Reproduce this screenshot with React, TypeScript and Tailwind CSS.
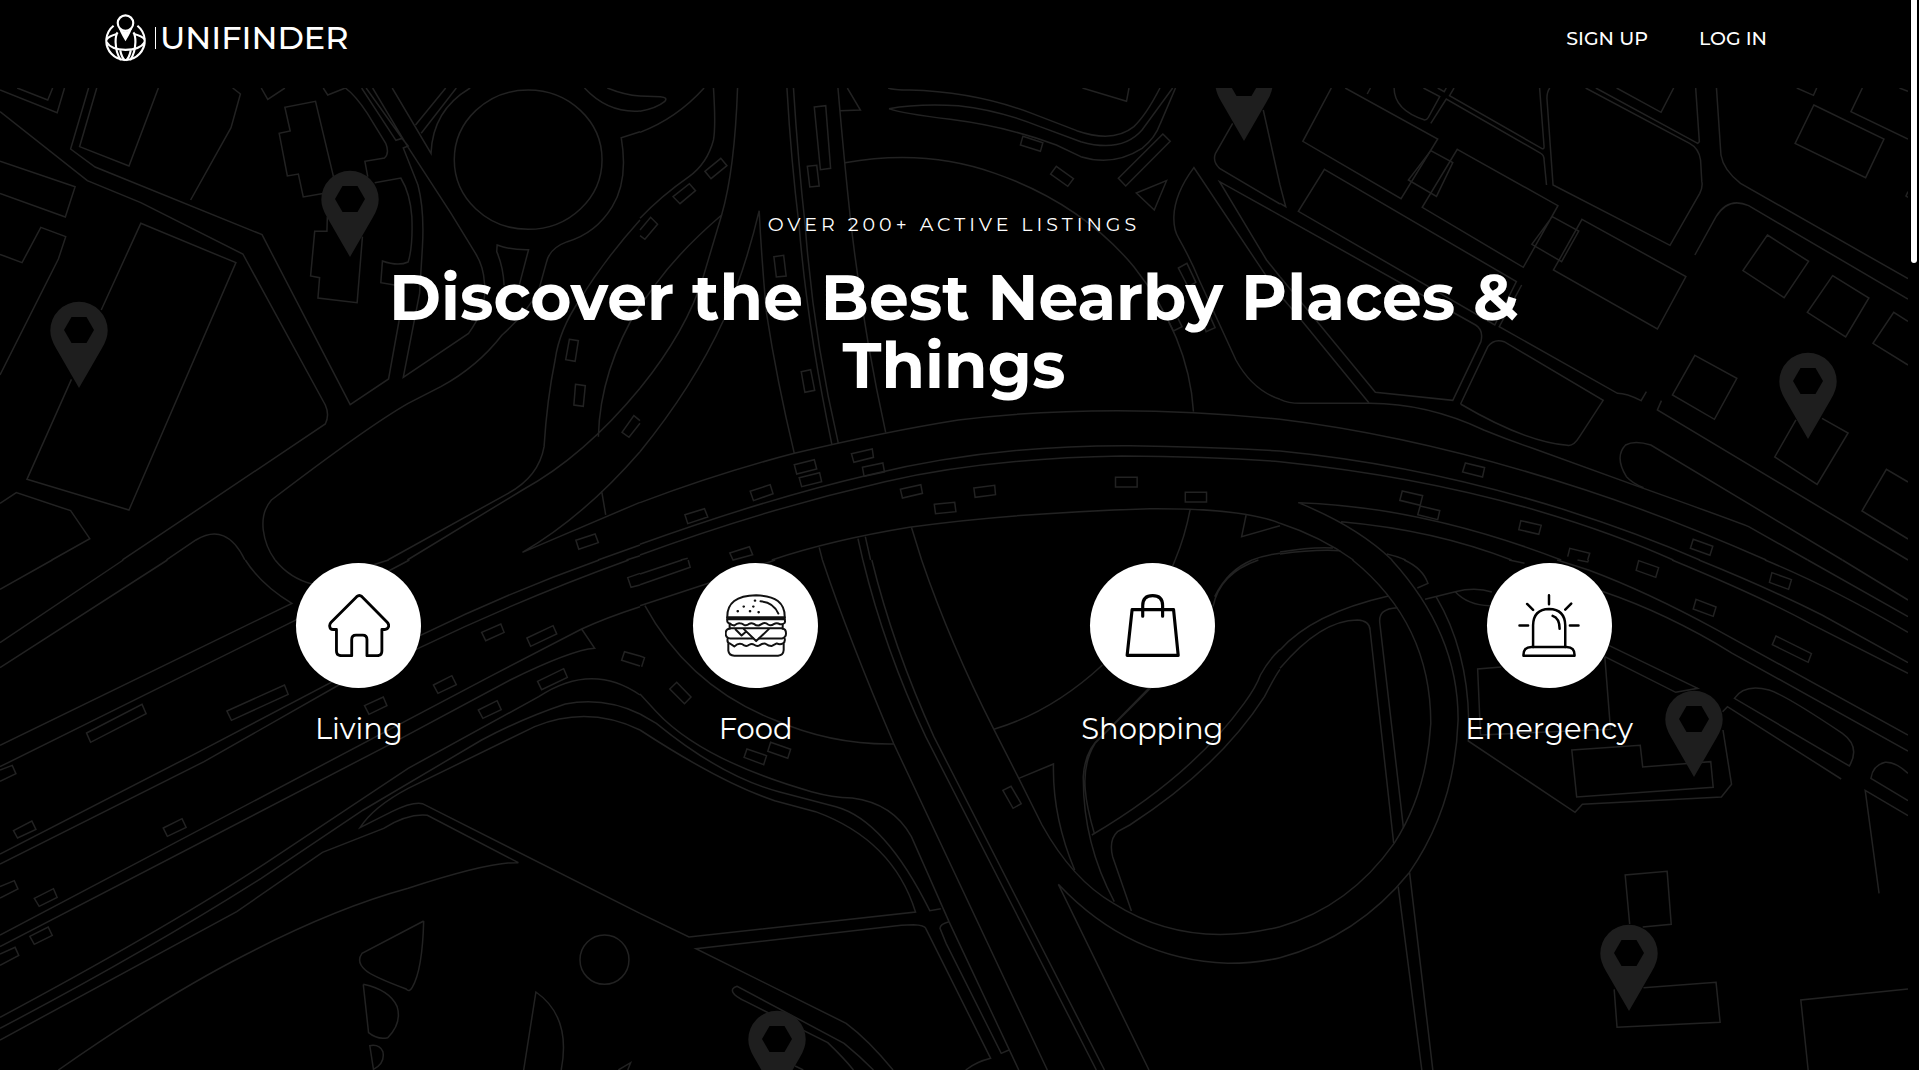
import type { ReactNode } from "react";

type Tile = { transform: string; paths: string[] };

/* Street map line work, split in six sectors that share one drawing area. */
const tiles: Tile[] = [
  {
    transform: "translate(0 60) scale(0.40816 0.33333)",
    paths: [
      "M0 90L140 158L158 84M42 84L117 120L129 84",
      "M0 155L214 362L345 428L595 582L797 1035Q808 1065 797 1092L300 1500",
      "M217 84L173 267L233 321L642 524L858 1034L952 957L978 780",
      "M237 84L195 260L316 318L388 84M570 84L589 102L566 203L467 420M640 84L656 118L698 84",
      "M792 84L803 105L846 84Q870 105 900 160L945 250Q955 280 942 294L894 304L901 350",
      "M795 400L743 411L731 342L704 348L684 220L711 213L698 142L773 124L817 350",
      "M802 470L801 514L771 514L761 648L783 653L779 714L875 728L888 530",
      "M918 368L982 354Q1005 400 1009 470Q1012 560 1000 606Q975 620 937 603L933 668L970 676",
      "M886 84L970 241L988 234M897 84L988 240L1000 258L988 264L1024 375Q1040 450 1035 560L1028 700L988 952L1148 820Q1195 740 1187 670Q1185 620 1165 580L1105 460L1000 262L913 84",
      "M961 84L1056 280Q1060 150 1152 84M1018 195L1092 84M1032 220L1118 84",
      "M1113 299a181 209 0 1 0 362 0a181 209 0 1 0 -362 0",
      "M1432 84Q1490 160 1568 153M1488 84Q1530 105 1568 108",
      "M1568 215L1522 233Q1540 360 1500 440Q1460 520 1390 545Q1345 565 1338 610L1320 690Q1290 760 1230 825Q1170 920 1080 980L1000 1030Q900 1100 665 1320Q640 1355 645 1410Q650 1460 674 1500",
      "M1235 676Q1233 620 1217 575L1218 555Q1250 570 1295 569L1272 676",
      "M1568 480Q1480 600 1420 720Q1370 810 1360 900Q1340 1020 1333 1160Q1320 1250 1245 1300L950 1500",
      "M1568 985Q1430 1190 1280 1290L998 1500M1568 735Q1470 930 1466 1130",
      "M1568 1175Q1430 1370 1280 1477L1568 1327M1474 1293L1484 1365M1465 1500L1568 1455M1535 1500L1568 1487",
      "M1395 838L1417 842L1409 904L1386 899ZM1410 973L1434 977L1429 1039L1406 1035ZM1568 1082L1553 1067L1524 1117L1541 1132L1568 1090M1411 1441L1458 1422L1466 1448L1418 1468Z",
      "M0 304L184 380L160 471L0 400M0 583L54 608L100 502L161 530L143 597L0 945",
      "M248 750L345 490L578 608L316 1350L66 1258L175 958",
      "M0 1330L40 1298L173 1352L220 1436L127 1500M408 1500L480 1440Q555 1385 600 1500",
    ],
  },
  {
    transform: "translate(640 60) scale(0.40816 0.33333)",
    paths: [
      "M0 108L50 110Q70 112 60 125Q40 145 0 154M0 217Q90 175 157 84",
      "M180 84Q186 200 180 240Q165 310 120 350Q50 410 0 475",
      "M239 84Q232 330 200 465L155 650Q115 810 0 985M200 465Q100 570 40 670L0 738",
      "M292 452Q260 620 205 780Q130 980 0 1175M292 452Q298 600 310 760Q335 960 378 1180",
      "M360 84Q370 300 390 500Q410 800 470 1153M376 84Q387 300 405 500Q425 830 486 1150",
      "M485 84Q500 300 515 470Q545 800 602 1118M508 84L540 150L490 152",
      "M427 141L455 137L467 325L442 329ZM410 319L433 316L439 378L416 381ZM328 590L352 586L358 648L334 651ZM395 935L418 929L428 991L404 997Z",
      "M159 334L198 295L213 317L174 356ZM81 410L121 371L136 392L98 431ZM0 510L26 472L43 493L12 538L0 527",
      "M502 308Q700 265 870 340Q1080 430 1210 620Q1345 830 1356 1055",
      "M608 84Q620 90 660 90Q820 95 960 160L1070 212Q1160 250 1210 200Q1240 165 1274 84",
      "M610 146Q680 130 780 137Q880 150 980 200L1080 245Q1180 280 1230 210L1305 84",
      "M610 146Q640 160 760 178Q900 200 1020 255L1080 290Q1160 320 1230 265Q1262 235 1275 190L1312 84M1084 84L1192 124L1198 84",
      "M938 229L987 248L981 274L932 255ZM1020 319L1062 356L1048 379L1006 342ZM1281 222L1299 244L1190 378L1172 355ZM1216 399L1290 362L1260 450Z",
      "M1568 705L1530 640L1357 323Q1310 400 1308 470Q1307 510 1320 535Q1350 600 1370 660L1460 900Q1500 990 1568 1018",
      "M1568 466L1420 365L1535 600L1568 650M1452 190L1410 280Q1402 305 1420 325L1568 432M1527 150L1568 375",
      "M1319 624L1340 610L1362 667L1343 681ZM1295 785L1307 813L1328 800L1318 775M1380 790L1387 815L1409 803L1397 770",
      "M0 1328Q190 1240 378 1180Q600 1115 780 1080Q1150 1025 1568 1078",
      "M0 1453Q300 1320 560 1245Q860 1155 1200 1157Q1400 1160 1568 1173",
      "M0 1485Q300 1350 600 1265Q850 1195 1180 1188Q1400 1190 1568 1205",
      "M323 1500Q470 1440 660 1402Q900 1360 1250 1346Q1400 1345 1482 1363Q1540 1375 1568 1390",
      "M378 1214L427 1199L433 1227L384 1242ZM390 1253L440 1238L445 1265L396 1280ZM518 1181L569 1167L572 1192L524 1207ZM545 1222L595 1209L599 1236L549 1249Z",
      "M270 1294L319 1274L326 1301L278 1322ZM110 1364L158 1346L166 1371L117 1391ZM638 1288L688 1274L692 1300L643 1314ZM818 1284L869 1276L871 1304L821 1312ZM721 1333L771 1327L774 1355L724 1361Z",
      "M1165 1252h53v29h-53ZM1336 1297h52v29h-52ZM220 1479L268 1460L276 1484L228 1500ZM100 1500L117 1495",
      "M439 1462L447 1500M534 1436L546 1500M552 1430L565 1500M665 1402L690 1500M1348 1348Q1335 1430 1311 1500",
      "M1485 1365L1474 1430L1568 1397M1500 1500Q1530 1485 1568 1480",
    ],
  },
  {
    transform: "translate(1280 60) scale(0.40753 0.33333)",
    paths: [
      "M126 84L56 244L297 416L387 237L160 84M222 84L214 102M280 84Q280 150 355 180Q360 180 364 172L392 110L352 84M387 84L403 95L408 84",
      "M427 84L416 107L643 266Q648 268 648 260L637 84M370 190L408 117L640 280Q648 285 648 300L654 375",
      "M662 84Q655 95 655 115L670 375L957 556L1030 400Q1038 380 1035 365L1032 300Q1028 265 1005 250L750 84",
      "M775 84L1025 250L1029 245L1020 84M826 84L935 157L966 84",
      "M1071 84L1082 285Q1088 330 1130 370L1541 656M1018 585L1070 470Q1100 410 1150 437L1541 717",
      "M1268 84L1309 106L1317 84M1429 84L1401 155L1541 237M1520 84L1541 94M1310 135L1482 237L1437 353L1264 250ZM1541 395L1536 408L1541 412",
      "M109 328L580 665L527 795L45 454ZM370 272L424 308L384 409L315 360ZM435 268L682 437L597 622L349 442ZM668 470L733 513L691 605L618 553ZM741 478L996 650L926 807L671 630Z",
      "M593 675L538 800L828 1000Q850 1000 886 1022L899 995M936 1022L926 1050L1541 1500",
      "M1196 525L1297 604L1237 713L1136 632ZM1356 647L1445 714L1388 831L1294 757ZM1541 784L1506 757L1455 850L1541 915M1018 886L1121 955L1066 1078L963 1005Z",
      "M1330 1075L1394 1119L1318 1273L1214 1191L1266 1080M1541 1266L1488 1228L1428 1353L1541 1437",
      "M0 466L480 795Q500 810 493 845L424 1021L234 997L88 780L0 650M0 705L52 780L218 1028M0 375L14 440L0 430",
      "M0 1018Q20 1030 50 1030L220 1030Q360 1030 500 1110Q560 1140 620 1165L880 1280Q1110 1380 1150 1400L1295 1500",
      "M0 1078Q350 1130 750 1290Q950 1370 1193 1500M0 1173Q350 1215 700 1350Q880 1420 1030 1500M0 1205Q350 1250 640 1355Q820 1420 965 1500",
      "M1380 1500L910 1155Q870 1140 848 1155Q820 1190 850 1250Q865 1270 892 1283",
      "M443 1032L510 860Q525 835 550 845L793 1021L735 1130Q720 1160 705 1156Q600 1145 443 1032",
      "M0 1390Q100 1430 180 1500M275 1500Q190 1400 45 1328Q350 1340 690 1500M150 1385Q380 1410 568 1500",
      "M0 1476Q80 1460 130 1464M0 1482Q80 1468 148 1472M262 1482Q290 1490 308 1500",
      "M455 1209L502 1223L497 1251L448 1236ZM300 1293L350 1307L344 1336L294 1321ZM344 1338L392 1352L387 1379L338 1364ZM591 1382L641 1396L635 1423L586 1409ZM1014 1438L1062 1459L1055 1486L1007 1465ZM706 1490L711 1465L760 1480L755 1500",
    ],
  },
  {
    transform: "translate(0 560) scale(0.40816 0.33333)",
    paths: [
      "M0 88L128 0M0 248L302 0M0 323L410 0M601 0Q640 75 715 130L0 556M674 0Q710 55 765 72L952 0M0 620L728 178L1003 0",
      "M0 882L480 580L1034 224Q1250 95 1468 0M0 912L500 605L830 375L1030 262Q1280 115 1540 0",
      "M0 1125L1200 350L1425 207Q1480 175 1568 140M0 1160L960 550L1250 360Q1400 270 1457 265L1425 207",
      "M0 1372Q400 1110 650 910L1000 625L1320 410Q1450 305 1568 405",
      "M0 1405Q350 1180 640 955L890 750L1180 540Q1280 475 1385 432Q1480 410 1568 462",
      "M0 1440L580 1055L790 877L940 805Q1000 760 1047 766L1270 908Q1200 905 1000 985Q820 1045 600 1185Q400 1310 143 1530",
      "M1568 510Q1440 435 1310 500L1000 685Q915 740 882 803L960 755Q1010 725 1035 731L1568 1060",
      "M1038 1083L887 1180Q872 1205 895 1230Q910 1248 995 1287Q1003 1298 1010 1282Q1035 1230 1038 1083M890 1273L903 1418Q925 1440 950 1433Q985 1390 973 1340Q955 1290 890 1273M906 1457Q930 1452 938 1475Q944 1510 915 1528Z",
      "M1283 1530L1313 1296Q1400 1370 1375 1530M1421 1199a60 74 0 1 0 120 0a60 74 0 1 0 -120 0M1515 1530L1545 1508L1538 1530",
      "M212 519L348 433L358 461L222 547ZM556 453L697 375L706 403L567 481ZM893 437L939 411L948 437L904 463ZM1062 375L1107 347L1118 374L1073 400ZM1180 217L1227 192L1235 217L1190 242ZM1291 234L1355 197L1364 222L1300 259Z",
      "M1317 364L1381 326L1390 352L1327 389ZM1172 450L1218 422L1228 449L1183 475ZM400 804L446 776L456 802L410 829ZM33 812L78 783L88 808L43 834ZM84 1015L131 986L140 1012L96 1039ZM73 1129L118 1101L128 1126L84 1153Z",
      "M0 630L30 616L39 641L0 664M0 980L35 962L44 987L0 1014M0 1182L37 1162L46 1186L0 1216M1568 40L1538 53L1546 82L1568 75M1568 288L1530 275L1523 301L1568 318",
    ],
  },
  {
    transform: "translate(640 560) scale(0.40816 0.33333)",
    paths: [
      "M0 42L103 0M118 0L123 22L0 74M0 137L175 67L331 0M12 137Q120 380 330 480Q470 555 622 552M0 288L11 293L4 320",
      "M73 387L90 367L125 411L109 431ZM262 567L310 587L303 614L255 592ZM320 547L369 568L362 595L313 574ZM889 691L909 679L934 731L914 745Z",
      "M447 0Q510 230 622 552L998 1530M546 0Q600 270 700 530L1118 1530M568 0Q620 260 720 530L1138 1530",
      "M690 0Q760 250 867 508L928 655L985 795Q1060 960 1160 1030Q1340 1170 1568 1100",
      "M1568 1193Q1510 1210 1440 1210Q1200 1200 1025 973L1247 1530",
      "M0 402L40 455Q150 600 420 695Q470 712 520 714Q620 730 665 830L757 1085L928 1530",
      "M0 462L40 490Q200 650 340 695L480 740Q600 780 710 1052L737 1046",
      "M0 510Q200 670 330 722L430 755Q620 840 675 1056L120 1131L0 1060",
      "M757 1085Q735 1092 735 1105L750 1150L885 1480L904 1470",
      "M798 1530Q825 1505 859 1495L700 1105Q697 1095 670 1094L640 1096L137 1166L505 1390Q560 1440 620 1530",
      "M572 1530Q540 1490 500 1450L238 1279Q222 1285 228 1298Q233 1310 260 1325L460 1448Q500 1495 523 1530M380 1518L400 1530",
      "M867 508Q1010 455 1133 315M928 655L1013 612Q1010 770 1065 930",
      "M1250 380L1130 530Q1090 570 1086 650Q1085 850 1162 1025M1253 382L1115 550Q1085 610 1091 690Q1094 740 1113 820",
      "M1107 825Q1350 650 1480 430Q1510 380 1520 345Q1540 300 1568 268",
      "M1568 328Q1555 350 1530 410Q1420 620 1200 795L1170 815Q1148 840 1158 890L1204 1053",
      "M1311 0L1305 18M1404 140Q1420 40 1515 0M1408 110Q1440 30 1500 0",
    ],
  },
  {
    transform: "translate(1280 560) scale(0.40753 0.33333)",
    paths: [
      "M178 0Q370 190 370 490Q360 700 280 850Q170 1040 0 1100M274 0Q438 220 437 480Q430 740 317 938Q190 1130 0 1193",
      "M0 270Q80 160 266 108M356 118L430 95Q480 80 520 96M430 95Q460 135 515 137M305 0Q350 25 363 70L337 84",
      "M383 110Q460 270 463 480L462 543L724 757L742 733L1083 711L1108 673L1087 510M1086 455L1098 440L1377 657",
      "M0 325Q100 180 190 180Q220 182 221 210L279 850M288 143Q240 145 245 190L303 805M290 980L348 1530M318 938L375 1530",
      "M543 321L485 327L492 525L811 508L797 290M716 570L884 556L890 621L1057 605L1063 682L728 711Z",
      "M808 257L1025 385L971 397L797 290M562 0L600 10M680 0L757 30Q900 95 1070 208L1541 525M790 94Q950 160 1110 280L1541 573M730 0L755 6L757 0",
      "M962 0Q1180 110 1300 190L1541 340M1028 0Q1200 85 1330 165L1541 308M1190 0Q1350 80 1541 217M1295 0L1541 170M1380 0L1541 120",
      "M880 2L929 23L922 52L874 31ZM1207 38L1255 59L1248 88L1201 67ZM1021 118L1070 141L1063 169L1014 147ZM1217 228L1304 281L1296 307L1208 254Z",
      "M1115 415Q1140 370 1200 390Q1240 405 1380 520Q1425 560 1397 618ZM1541 640Q1510 605 1485 607Q1455 615 1450 655L1541 722M1541 767L1436 691L1470 1000",
      "M858 1092L847 945L950 934L960 1093L890 1101M820 1288L827 1402L1080 1387L1070 1267L892 1283M1541 1287L1278 1320L1296 1530",
    ],
  },
];

/* Tips of the map pins. */
const pins = [
  [350, 257],
  [79, 388],
  [1244, 141],
  [1808, 439],
  [1694, 777],
  [1629, 1011],
  [777, 1097],
];

function MapBackground() {
  return (
    <svg
      className="absolute inset-0 h-full w-full"
      viewBox="0 88 1908 982"
      preserveAspectRatio="xMidYMin slice"
      aria-hidden="true"
    >
      {tiles.map((t) => (
        <g key={t.transform} transform={t.transform} fill="none" stroke="#222" strokeWidth="1.5">
          {t.paths.map((d) => (
            <path key={d} d={d} vectorEffect="non-scaling-stroke" />
          ))}
        </g>
      ))}
      {pins.map(([x, y]) => (
        <g key={x} transform={`translate(${x} ${y})`}>
          <path
            fill="#1e1e1e"
            d="M0 0L-22.5 -39Q-28.7 -49 -28.7 -57.5A28.7 28.7 0 0 1 28.7 -57.5Q28.7 -49 22.5 -39Z"
          />
          <path fill="#000" d="M-15 -58L-7.500 -71H7.500L15 -58L7.500 -45H-7.500Z" />
        </g>
      ))}
    </svg>
  );
}

function Logo() {
  return (
    <svg className="h-12 w-[41px] shrink-0" viewBox="44 42 124 144" fill="none" stroke="#fff" strokeWidth="6.500" aria-hidden="true">
      <path d="M70 77A58 58 0 1 0 142 77" />
      <path d="M49 127Q62 149 106 150Q150 149 164 127" />
      <path d="M49 118Q56 108 80 102M164 118Q156 108 132 102" />
      <path d="M82 97Q76 106 76 126Q77 160 92 181M130 97Q136 106 136 126Q135 160 120 181" />
      <path d="M90 151Q94 172 104 182M122 151Q118 172 108 182" />
      <circle cx="106" cy="69" r="23.500" />
      <path d="M85 79Q91 94 106 94Q121 94 127 79Q126 91 106 124Q86 91 85 79Z" fill="#fff" stroke="none" />
    </svg>
  );
}

const houseIcon = (
  <svg className="h-[63px] w-[62px]" viewBox="144 131 186 190" fill="none" stroke="#000" strokeWidth="8.500" strokeLinejoin="round" aria-hidden="true">
    <path d="M230 139Q238 132 246 139L322 216Q328 222 326 230Q323 238 315 238H306V303Q306 317 292 317H261V268Q261 255 248 255H228Q215 255 215 268V317H184Q169 317 169 303V238H159Q150 238 149 230Q147 222 153 216Z" />
  </svg>
);

const burgerIcon = (
  <svg className="h-[63px] w-[62px]" viewBox="134 131 187 190" fill="none" stroke="#111" strokeWidth="6" strokeLinecap="round" strokeLinejoin="round" aria-hidden="true">
    <path d="M141 202Q139 136 228 135Q316 136 314 202" />
    <path d="M141 201H314V207H141Z" fill="#555" />
    <path d="M141 207Q139 219 149 220Q154 225 162 226Q171 218 178 219Q185 219 191 224Q199 228 207 221Q213 217 221 221Q229 227 236 226L250 219Q257 217 264 223Q272 228 281 222Q290 216 299 222Q308 224 314 218Q316 214 314 207" />
    <path d="M148 222V234M308 222V234M148 234H308" />
    <path d="M148 236Q136 237 136 250Q136 264 150 265H219M237 265H306Q318 262 318 250Q318 237 308 236" />
    <path d="M191 237L228 273L266 237M166 238L184 256L198 244" />
    <path d="M142 266Q139 278 150 281L162 289Q171 281 179 281Q186 281 192 286Q200 290 207 284Q215 279 222 284Q230 290 238 286Q248 279 256 281Q266 288 274 288L290 280Q300 285 309 280Q316 276 314 266" />
    <path d="M144 282V302Q146 317 162 317H294Q310 316 311 300V282" />
    <path d="M241 153Q280 156 295 190" />
    <path d="M224 151h1M190 169h1M219 169h1M172 183h1M209 183h1M235 186h1" strokeWidth="7" />
  </svg>
);

const bagIcon = (
  <svg className="h-[63px] w-[55px]" viewBox="165 131 165 190" fill="none" stroke="#000" strokeWidth="9.500" strokeLinejoin="round" strokeLinecap="round" aria-hidden="true">
    <path d="M186 178H311L325 316H171Z" />
    <path d="M218 198V166Q218 136 248 136Q278 136 278 166V198" />
  </svg>
);

const sirenIcon = (
  <svg className="h-[63px] w-[62px]" viewBox="204 131 186 190" fill="none" stroke="#000" strokeWidth="7.500" strokeLinejoin="round" strokeLinecap="round" aria-hidden="true">
    <path d="M249 291V225Q250 177 297 176Q345 177 346 225V291" />
    <path d="M220 317Q219 291 244 291H350Q375 291 374 317Z" />
    <path d="M308 197Q329 204 329 236M297 135V162M231 161L249 179M364 160L346 178M208 226H234M360 226H386" />
  </svg>
);

const categories: { name: string; icon: ReactNode }[] = [
  { name: "Living", icon: houseIcon },
  { name: "Food", icon: burgerIcon },
  { name: "Shopping", icon: bagIcon },
  { name: "Emergency", icon: sirenIcon },
];

export default function App() {
  return (
    <div className="flex min-h-screen bg-black font-['Montserrat','Inter',sans-serif] text-white">
      <div className="flex min-w-0 flex-1 flex-col">
        <header className="flex h-[88px] items-start justify-between pr-[141px] pl-[105px]">
          <a href="#home" className="mt-[14px] flex items-center" aria-label="Unifinder">
            <Logo />
            <span className="ml-[9px] h-[22px] w-px bg-white" />
            <span className="ml-[4px] text-[32px] leading-[48px] font-medium">UNIFINDER</span>
          </a>
          <nav className="mt-[25px] flex gap-[51px] text-[19px] leading-[28px] font-medium">
            <a href="#signup">SIGN UP</a>
            <a href="#login">LOG IN</a>
          </nav>
        </header>

        <main className="relative flex-1 overflow-hidden">
          <MapBackground />
          <div className="relative flex flex-col items-center pt-[123px]">
            <p className="text-[19px] leading-[28px] tracking-[4px]">OVER 200+ ACTIVE LISTINGS</p>
            <h1 className="mt-[25px] max-w-[1200px] text-center text-[63px] leading-[68px] font-bold">
              Discover the Best Nearby Places &amp; Things
            </h1>
            <ul className="mt-[163px] grid w-full max-w-[1587px] grid-cols-4">
              {categories.map((c) => (
                <li key={c.name}>
                  <a href={"#" + c.name.toLowerCase()} className="flex flex-col items-center">
                    <span className="flex size-[125px] items-center justify-center rounded-full bg-white">{c.icon}</span>
                    <span className="mt-[20px] text-[29px] leading-[42px]">{c.name}</span>
                  </a>
                </li>
              ))}
            </ul>
          </div>
        </main>
      </div>
      <div className="flex w-[11px] shrink-0 justify-center" aria-hidden="true">
        <div className="h-[263px] w-[6px] rounded-b-full bg-white" />
      </div>
    </div>
  );
}
